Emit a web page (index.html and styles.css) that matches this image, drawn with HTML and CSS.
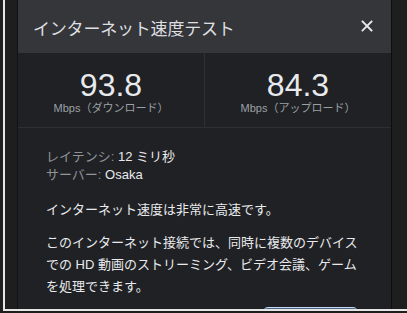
FILE: index.html
```html
<!DOCTYPE html>
<html lang="ja">
<head>
<meta charset="utf-8">
<link rel="stylesheet" href="styles.css">
</head>
<body>
<div class="frame">
  <div class="panel">
    <div class="header">
      <div class="title">インターネット速度テスト</div>
      <div class="close" aria-label="閉じる">
        <svg width="12" height="12" viewBox="0 0 12 12"><path d="M1.5 1.5 L10.5 10.5 M10.5 1.5 L1.5 10.5" stroke="#e8eaed" stroke-width="1.8" stroke-linecap="square"/></svg>
      </div>
    </div>
    <div class="stats">
      <div class="stat">
        <div class="num">93.8</div>
        <div class="unit">Mbps（ダウンロード）</div>
      </div>
      <div class="stat">
        <div class="num">84.3</div>
        <div class="unit">Mbps（アップロード）</div>
      </div>
    </div>
    <div class="content">
      <div class="meta"><span class="label">レイテンシ:</span> 12 ミリ秒</div>
      <div class="meta"><span class="label">サーバー:</span> Osaka</div>
      <p class="verdict">インターネット速度は非常に高速です。</p>
      <p class="desc">このインターネット接続では、同時に複数のデバイスでの HD 動画のストリーミング、ビデオ会議、ゲームを処理できます。</p>
      <div class="actions"><div class="btn"></div></div>
    </div>
  </div>
</div>
</body>
</html>
```
FILE: styles.css
```css
html, body {
  margin: 0;
  padding: 0;
  background: #1e1e1f;
  overflow: hidden;
}
body {
  width: 407px;
  height: 313px;
  padding-left: 3px;
  box-sizing: border-box;
  font-family: "Liberation Sans", "Noto Sans CJK JP", sans-serif;
}
.frame {
  height: 309px;
  border-left: 2px solid #e6e6e6;
  border-bottom: 2px solid #e6e6e6;
  padding-left: 12px;
  box-sizing: content-box;
  display: flex;
  overflow: hidden;
}
.panel {
  width: 373px;
  height: 309px;
  background: #202124;
  border-left: 1px solid #121212;
  border-right: 1px solid #0e0e0e;
  display: flex;
  flex-direction: column;
  overflow: hidden;
  flex: none;
}
.header {
  height: 53px;
  flex: none;
  background: #35363a;
  display: flex;
  align-items: flex-start;
  justify-content: space-between;
  padding: 0 18px 0 15px;
}
.title {
  margin-top: 19px;
  font-size: 17px;
  line-height: 22px;
  color: #dedfe0;
  letter-spacing: -0.2px;
}
.close {
  margin-top: 20px;
  width: 12px;
  height: 12px;
  display: flex;
}
.stats {
  display: flex;
  flex: none;
  border-bottom: 1px solid #2e2f32;
}
.stat {
  flex: 1;
  text-align: center;
  padding: 16px 0 12px;
}
.stat + .stat {
  border-left: 1px solid #2e2f32;
}
.num {
  font-size: 32px;
  line-height: 32px;
  color: #e8eaed;
}
.unit {
  font-size: 11px;
  line-height: 14px;
  color: #9aa0a6;
}
.content {
  padding: 20px 31px 0 28px;
  color: #e8eaed;
  font-size: 13px;
}
.meta {
  line-height: 18px;
}
.label {
  color: #8f9499;
}
.verdict {
  margin: 17px 0 0;
  line-height: 18px;
}
.desc {
  margin: 13px 0 0;
  line-height: 22px;
}
.actions {
  display: flex;
  justify-content: flex-end;
  margin-top: 9px;
  padding-right: 3px;
}
.btn {
  width: 93px;
  height: 36px;
  border-radius: 4px;
  background: #46648c;
  border-top: 1px solid #c8d8ee;
}
```
